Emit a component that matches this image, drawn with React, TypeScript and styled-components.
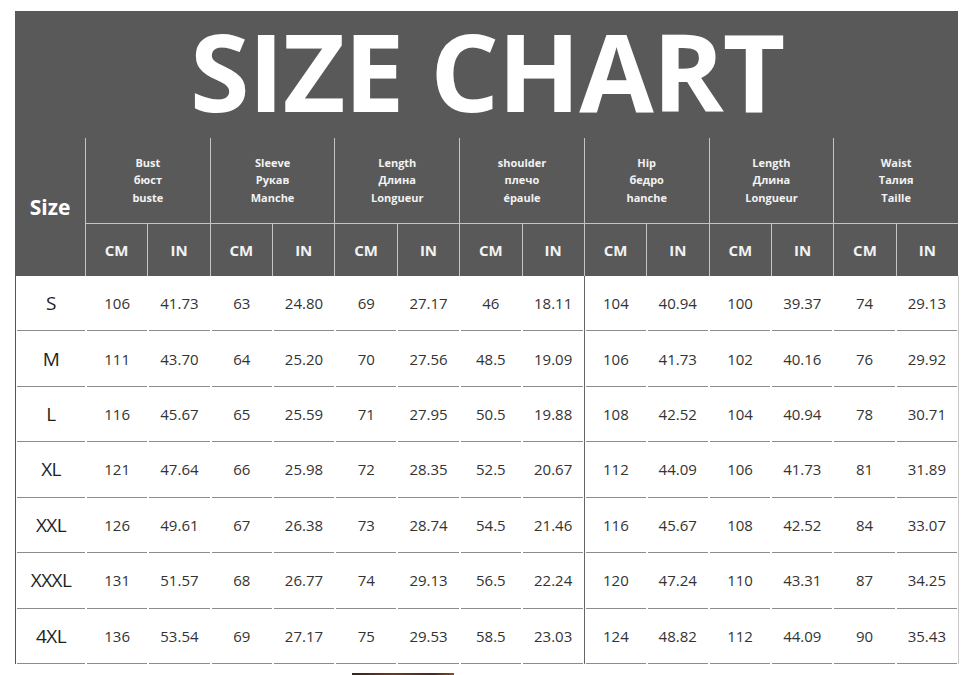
import React from 'react';
import styled, { createGlobalStyle } from 'styled-components';

const GlobalStyle = createGlobalStyle`
  html, body {
    margin: 0;
    padding: 0;
    background: #ffffff;
  }
  body {
    font-family: "Open Sans", "Liberation Sans", sans-serif;
  }
`;

const groups = [
  ['Bust', 'бюст', 'buste'],
  ['Sleeve', 'Рукав', 'Manche'],
  ['Length', 'Длина', 'Longueur'],
  ['shoulder', 'плечо', 'épaule'],
  ['Hip', 'бедро', 'hanche'],
  ['Length', 'Длина', 'Longueur'],
  ['Waist', 'Талия', 'Taille'],
];

const rows: [string, string[]][] = [
  ['S', ['106', '41.73', '63', '24.80', '69', '27.17', '46', '18.11', '104', '40.94', '100', '39.37', '74', '29.13']],
  ['M', ['111', '43.70', '64', '25.20', '70', '27.56', '48.5', '19.09', '106', '41.73', '102', '40.16', '76', '29.92']],
  ['L', ['116', '45.67', '65', '25.59', '71', '27.95', '50.5', '19.88', '108', '42.52', '104', '40.94', '78', '30.71']],
  ['XL', ['121', '47.64', '66', '25.98', '72', '28.35', '52.5', '20.67', '112', '44.09', '106', '41.73', '81', '31.89']],
  ['XXL', ['126', '49.61', '67', '26.38', '73', '28.74', '54.5', '21.46', '116', '45.67', '108', '42.52', '84', '33.07']],
  ['XXXL', ['131', '51.57', '68', '26.77', '74', '29.13', '56.5', '22.24', '120', '47.24', '110', '43.31', '87', '34.25']],
  ['4XL', ['136', '53.54', '69', '27.17', '75', '29.53', '58.5', '23.03', '124', '48.82', '112', '44.09', '90', '35.43']],
];

const Page = styled.div`
  padding: 11px 0 0 15px;
  width: 966px;
  height: 675px;
  box-sizing: border-box;
  overflow: hidden;
`;

const Chart = styled.div`
  width: 943px;
`;

const Head = styled.div`
  background: #595959;
  color: #ffffff;
`;

const Title = styled.h1`
  margin: 0;
  height: 127px;
  display: flex;
  align-items: center;
  justify-content: center;
  padding: 0 0 8px 1px;
  box-sizing: border-box;
  font-family: "Open Sans", sans-serif;
  font-weight: 700;
  font-size: 108px;
  line-height: 1.05;
  letter-spacing: -1.2px;
`;

const HeadGrid = styled.div`
  display: grid;
  grid-template-columns: 70px repeat(14, 1fr);
  grid-template-rows: 86px 52px;
`;

const SizeLabel = styled.div`
  grid-row: 1 / span 2;
  display: flex;
  align-items: center;
  justify-content: center;
  font-weight: 700;
  font-size: 21px;
`;

const GroupCell = styled.div`
  grid-column: span 2;
  border-left: 1px solid #c4c4c4;
  border-bottom: 1px solid #c4c4c4;
  display: flex;
  flex-direction: column;
  align-items: center;
  justify-content: center;
  font-weight: 700;
  font-size: 11px;
  line-height: 17.5px;
  color: #f2f2f2;
  padding-bottom: 1px;
`;

const UnitCell = styled.div`
  border-left: 1px solid #c4c4c4;
  display: flex;
  align-items: center;
  justify-content: center;
  font-weight: 700;
  font-size: 15px;
  color: #f2f2f2;
`;

const Body = styled.div`
  display: grid;
  grid-template-columns: 70px repeat(14, 1fr);
  grid-template-rows: repeat(7, 1fr);
  height: 388px;
  border-left: 1px solid #555555;
  border-right: 1px solid #c8c8c8;
  margin-right: -1px;
`;

const Cell = styled.div<{ $divider?: boolean; $size?: boolean }>`
  display: flex;
  align-items: center;
  justify-content: center;
  font-size: ${(p) => (p.$size ? '19px' : '15px')};
  color: ${(p) => (p.$size ? '#1e1e1e' : '#333333')};
  letter-spacing: ${(p) => (p.$size ? '-0.6px' : '0')};
  padding-bottom: 1px;
  border-left: ${(p) => (p.$divider ? '1px solid #666666' : 'none')};
  background: linear-gradient(#8c8c8c, #8c8c8c) no-repeat 1px 100% / calc(100% - 2px) 1px;
`;

const Fragment = styled.div`
  margin: 9px 0 0 337px;
  width: 102px;
  height: 8px;
  background: linear-gradient(90deg, #3a2218, #6b3a22 40%, #4a2a1c 80%, #8a4a2a);
`;

export default function App() {
  return (
    <Page>
      <GlobalStyle />
      <Chart>
        <Head>
          <Title>SIZE CHART</Title>
          <HeadGrid>
            <SizeLabel>Size</SizeLabel>
            {groups.map((g, i) => (
              <GroupCell key={i}>
                {g.map((line) => (
                  <span key={line}>{line}</span>
                ))}
              </GroupCell>
            ))}
            {groups.map((_, i) => (
              <React.Fragment key={i}>
                <UnitCell>CM</UnitCell>
                <UnitCell>IN</UnitCell>
              </React.Fragment>
            ))}
          </HeadGrid>
        </Head>
        <Body>
          {rows.map(([size, values]) => (
            <React.Fragment key={size}>
              <Cell $size>{size}</Cell>
              {values.map((v, i) => (
                <Cell key={i} $divider={i === 8}>
                  {v}
                </Cell>
              ))}
            </React.Fragment>
          ))}
        </Body>
      </Chart>
      <Fragment />
    </Page>
  );
}
